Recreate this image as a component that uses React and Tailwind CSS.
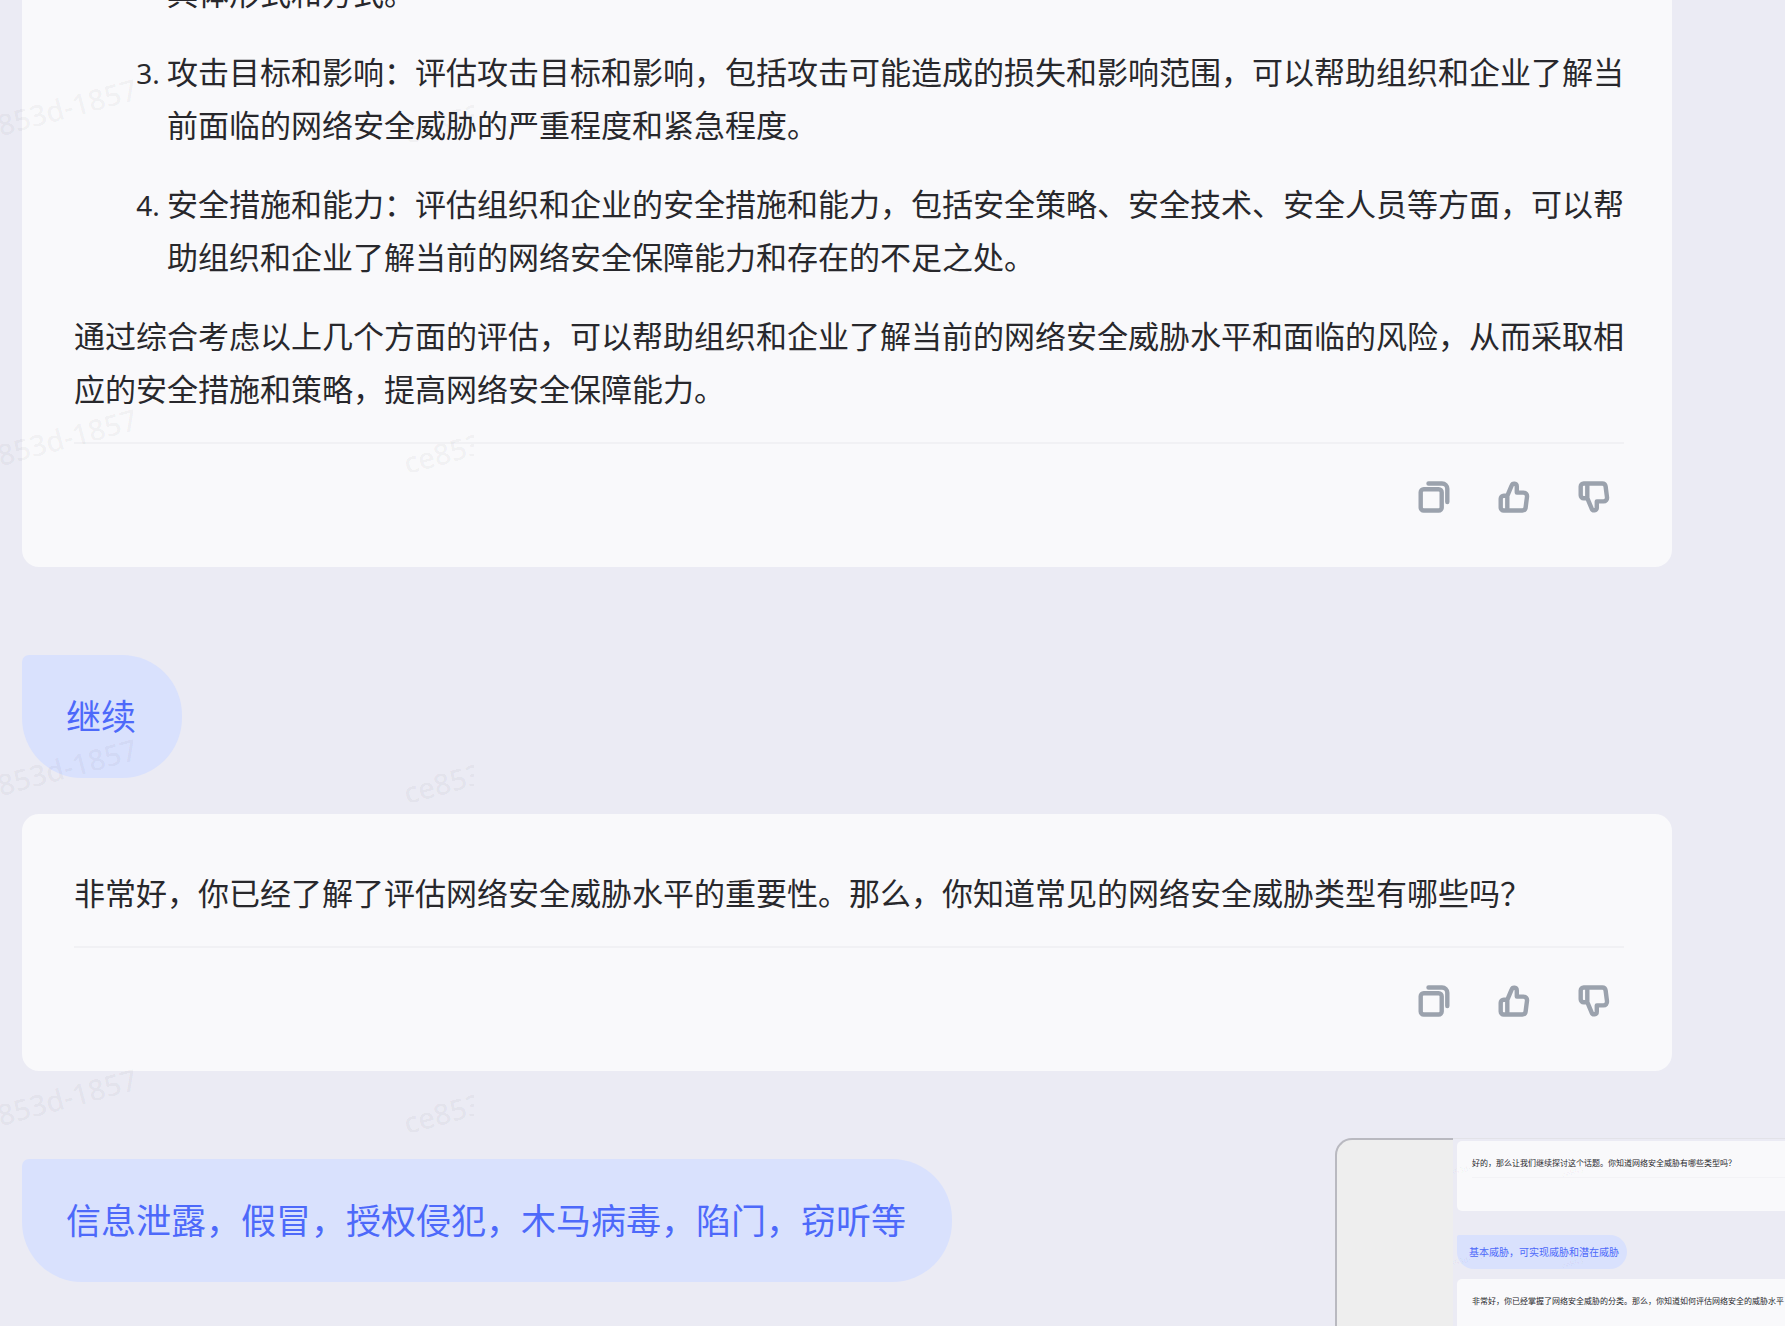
// App.jsx
import React from "react";

const CopyIcon = () => (
  <svg className="size-8" viewBox="0 0 32 32" fill="none" stroke="currentColor" strokeWidth="4.4" strokeLinecap="round" strokeLinejoin="round">
    <rect x="2.7" y="8.3" width="21" height="21.2" rx="3" />
    <path d="M10.5 2.5H24a5.3 5.3 0 0 1 5.3 5.3V21" />
  </svg>
);

const ThumbIcon = ({ down }) => (
  <svg className={down ? "size-8 -scale-y-100" : "size-8"} viewBox="0 0 32 32" fill="none" stroke="currentColor" strokeWidth="4.4" strokeLinecap="round" strokeLinejoin="round">
    <path d="M9.3 14.8 13.6 4.6C14.6 1.8 18.8 2 18.8 5.6V11.6H25.4a3.6 3.6 0 0 1 3.6 4.1L27.6 26.6a3.4 3.4 0 0 1-3.4 2.9H5.7a3 3 0 0 1-3-3V17.8a3 3 0 0 1 3-3H9.3V29" />
  </svg>
);

const Actions = () => (
  <div className="mt-[26px] flex justify-end gap-12 border-t-2 border-[#f1f1f4] pt-[37px] pr-3.5 pb-[54px] text-[#9ba2ad]">
    <button aria-label="复制"><CopyIcon /></button>
    <button aria-label="赞"><ThumbIcon /></button>
    <button aria-label="踩"><ThumbIcon down /></button>
  </div>
);

const Question = ({ children }) => (
  <div className="w-fit rounded-[60px] rounded-tl-[7px] bg-[#d9e1fd] py-[35px] pr-[46px] pl-11 text-[35px] leading-[53px] text-[#4d69fa]">
    {children}
  </div>
);

const watermarkRows = [0, 1, 2, 3];

const Watermark = () => (
  <div aria-hidden="true" className="pointer-events-none absolute inset-0 overflow-hidden text-[29px] leading-[30px] font-medium text-black/5">
    <div className="-ml-7 w-[502px] overflow-hidden">
      {watermarkRows.map((row) => (
        <div key={row} className="flex h-[330px] pt-[118px]">
          <span className="h-[30px] w-[436px] shrink-0 origin-bottom-left -rotate-15">ce853d-1857</span>
          <span className="h-[30px] shrink-0 origin-bottom-left -rotate-15">ce853d-1857</span>
        </div>
      ))}
    </div>
  </div>
);

const Preview = () => (
  <div className="absolute right-0 bottom-0 flex h-[188px] w-[450px] overflow-hidden">
    <div className="w-[118px] shrink-0 rounded-tl-[17px] border-t-2 border-l-2 border-[#b9b9c0] bg-[#eeeeee]"></div>
    <div className="relative flex-1 overflow-hidden border-t border-[#e2e2e8] bg-[#ebebf4] pt-0.5 pl-1">
      <div className="h-[70px] rounded-l-[5px] bg-[#f9f9fb] pt-4 pl-[15px] text-[8px] leading-3 whitespace-nowrap text-[#28282c]">
        <p>好的，那么让我们继续探讨这个话题。你知道网络安全威胁有哪些类型吗？</p>
        <div className="mt-2 border-t border-[#f3f3f6]"></div>
      </div>
      <div className="mt-6 w-[170px] rounded-[17px] rounded-tl-[2px] bg-[#d9e1fd] py-[11px] pl-3 text-[10px] leading-3 whitespace-nowrap text-[#4d69fa]">
        基本威胁，可实现威胁和潜在威胁
      </div>
      <div className="mt-2.5 h-[70px] rounded-tl-[5px] bg-[#f9f9fb] pt-4 pl-[15px] text-[8px] leading-3 whitespace-nowrap text-[#28282c]">
        <p>非常好，你已经掌握了网络安全威胁的分类。那么，你知道如何评估网络安全的威胁水平</p>
      </div>
      <div aria-hidden="true" className="pointer-events-none absolute inset-0 -ml-2.5 w-[140px] overflow-hidden text-[8px] leading-2 text-black/5">
        <div className="flex h-[91px] pt-8">
          <span className="h-2 w-[120px] shrink-0 origin-bottom-left -rotate-15">ce853d-1857</span>
          <span className="h-2 shrink-0 origin-bottom-left -rotate-15">ce853d-1857</span>
        </div>
        <div className="flex h-[91px] pt-8">
          <span className="h-2 w-[120px] shrink-0 origin-bottom-left -rotate-15">ce853d-1857</span>
          <span className="h-2 shrink-0 origin-bottom-left -rotate-15">ce853d-1857</span>
        </div>
      </div>
    </div>
  </div>
);

const App = () => {
  return (
    <div lang="zh-CN" className="relative h-screen overflow-hidden bg-[#ebebf4] font-['Noto_Sans','Noto_Sans_CJK_SC',sans-serif]">
      <main className="mr-[113px] ml-[22px] flex flex-col">
        <article className="rounded-b-[17px] bg-[#f9f9fb] pr-12 pl-[52px] text-[31px] leading-[53px] text-[#28282c]">
          <ol start="2" className="-mt-[33px] list-decimal space-y-[26px] pl-[93px] marker:text-[28px]">
            <li className="list-none">具体形式和方式。</li>
            <li>攻击目标和影响：评估攻击目标和影响，包括攻击可能造成的损失和影响范围，可以帮助组织和企业了解当前面临的网络安全威胁的严重程度和紧急程度。</li>
            <li>安全措施和能力：评估组织和企业的安全措施和能力，包括安全策略、安全技术、安全人员等方面，可以帮助组织和企业了解当前的网络安全保障能力和存在的不足之处。</li>
          </ol>
          <p className="mt-[26px]">通过综合考虑以上几个方面的评估，可以帮助组织和企业了解当前的网络安全威胁水平和面临的风险，从而采取相应的安全措施和策略，提高网络安全保障能力。</p>
          <Actions />
        </article>

        <div className="mt-[88px]">
          <Question>继续</Question>
        </div>

        <article className="mt-9 rounded-[17px] bg-[#f9f9fb] pt-[53px] pr-12 pl-[52px] text-[31px] leading-[53px] text-[#28282c]">
          <p>非常好，你已经了解了评估网络安全威胁水平的重要性。那么，你知道常见的网络安全威胁类型有哪些吗？</p>
          <Actions />
        </article>

        <div className="mt-[88px]">
          <Question>信息泄露，假冒，授权侵犯，木马病毒，陷门，窃听等</Question>
        </div>
      </main>
      <Watermark />
      <Preview />
    </div>
  );
};

export default App;
